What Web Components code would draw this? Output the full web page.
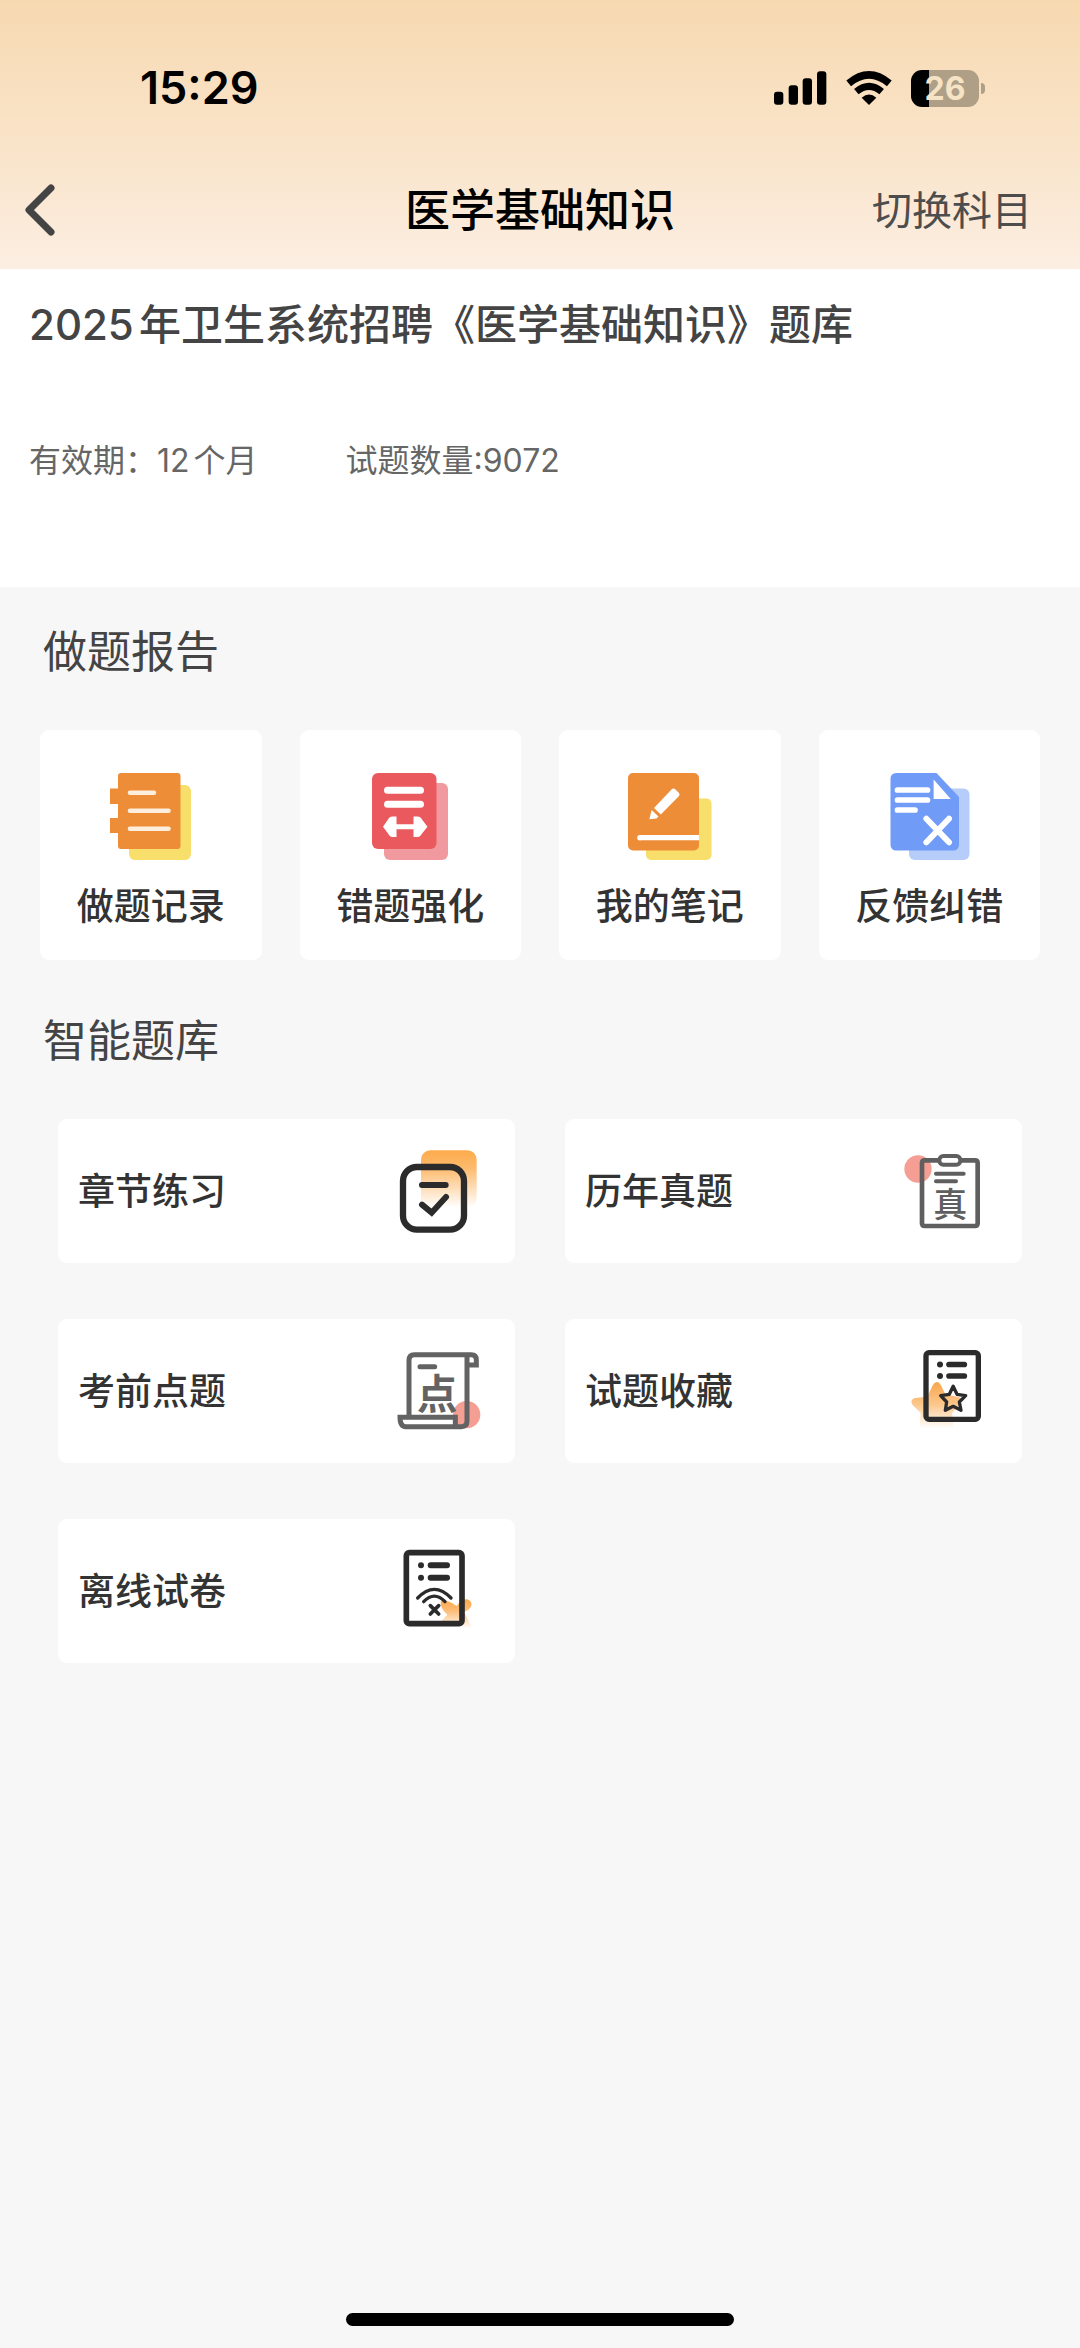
<!DOCTYPE html>
<html lang="zh-CN">
<head>
<meta charset="utf-8">
<meta name="viewport" content="width=device-width, initial-scale=1">
<title>医学基础知识</title>
<style>
  body {
    margin: 0;
    background: #f7f7f7;
    color: #333;
    font-family: Inter, "Noto Sans CJK SC", sans-serif;
    text-autospace: normal;
  }
  .tight { text-autospace: no-autospace; }
</style>
</head>
<body>
<question-bank-page>
  <phone-status slot="header" time="15:29" battery="26"></phone-status>
  <nav-bar slot="header">
    医学基础知识
    <span slot="action">切换科目</span>
  </nav-bar>
  <bank-summary>
    2025年卫生系统招聘《医学基础知识》题库
    <span slot="meta">有效期：12个月</span>
    <span slot="meta" class="tight">试题数量:9072</span>
  </bank-summary>
  <section-block heading="做题报告" layout="tiles">
    <report-tile icon="record">做题记录</report-tile>
    <report-tile icon="strengthen">错题强化</report-tile>
    <report-tile icon="note">我的笔记</report-tile>
    <report-tile icon="feedback">反馈纠错</report-tile>
  </section-block>
  <section-block heading="智能题库" layout="cards">
    <practice-card icon="chapter">章节练习</practice-card>
    <practice-card icon="past">历年真题</practice-card>
    <practice-card icon="predict">考前点题</practice-card>
    <practice-card icon="favorite">试题收藏</practice-card>
    <practice-card icon="offline">离线试卷</practice-card>
  </section-block>
</question-bank-page>

<script>
const ICONS = {
  record: `<svg viewBox="0 0 90 90" aria-hidden="true">
    <rect x="23" y="14" width="62" height="75" rx="6" fill="#f8de6b"/>
    <path d="M15 2H71.500a3 3 0 0 1 3 3V75a3 3 0 0 1-3 3H15a3 3 0 0 1-3-3V62H4V47H12V33H4V17.500H12V5a3 3 0 0 1 3-3z" fill="#ee8d38"/>
    <path d="M24 21.700H48M24 39.700H62.500M24 57.700H62.500" stroke="#fdeedd" stroke-width="4.600" stroke-linecap="round"/>
  </svg>`,
  strengthen: `<svg viewBox="0 0 90 90" aria-hidden="true">
    <rect x="19" y="12" width="64" height="77" rx="6" fill="#f09aa0"/>
    <rect x="7" y="2" width="64.500" height="76" rx="6" fill="#e9595e"/>
    <path d="M22.500 19.300H55.500M22.500 33.300H55.500" stroke="#fff" stroke-width="7" stroke-linecap="round"/>
    <path d="M18 55.700L23 48.500Q24.500 45.500 27.500 45.500H31.500V53.300H48.500V45.500H52.500Q55.500 45.500 57 48.500L62.500 55.700L57 62.500Q55 66 52.500 66H48.500V58.200H31.500V66H27.500Q25 66 23 62.500z" fill="#fff"/>
  </svg>`,
  note: `<svg viewBox="0 0 90 90" aria-hidden="true">
    <rect x="21" y="27.500" width="65.500" height="61.500" rx="5" fill="#f8de6b"/>
    <rect x="3" y="2" width="71" height="77.500" rx="5" fill="#ee8d38"/>
    <path d="M14.500 66.700H74" stroke="#fff" stroke-width="5.200"/>
    <circle cx="14.800" cy="66.700" r="2.600" fill="#fff"/>
    <path d="M29 37L46.500 18.500Q48.500 16.500 50.500 18.500L53.500 21.500Q55.500 23.500 53.500 25.500L35.800 43.500zM26.700 39L33.500 45.500L31.500 47.500L24.300 48.300z" fill="#fff"/>
  </svg>`,
  feedback: `<svg viewBox="0 0 90 90" aria-hidden="true">
    <rect x="25" y="17.500" width="60.500" height="71.500" rx="6" fill="#b6cdf9"/>
    <path d="M12 2H52.500L75 26V74a5.500 5.500 0 0 1-5.500 5.500H12A5.500 5.500 0 0 1 6.500 74V7.500A5.500 5.500 0 0 1 12 2z" fill="#709bf7"/>
    <path d="M49.600 8.500V28H66.800z" fill="#fff"/>
    <path d="M13.500 19H43.500M13.500 29H43.500M13.500 39H31" stroke="#fff" stroke-width="5.700" stroke-linecap="round"/>
    <path d="M42.400 47.700L65 71.300M65 47.700L42.400 71.300" stroke="#fff" stroke-width="6" stroke-linecap="round"/>
  </svg>`,
  chapter: `<svg viewBox="105 108 270 270" aria-hidden="true">
    <defs><linearGradient id="fade" x1="0" y1="0" x2="0" y2="1">
      <stop offset="0" stop-color="#fdab4c"/><stop offset=".3" stop-color="#fdba6c"/><stop offset="1" stop-color="#fff"/>
    </linearGradient></defs>
    <rect x="183" y="121" width="167" height="172" rx="28" fill="url(#fade)"/>
    <rect x="129" y="171" width="183" height="188" rx="42" fill="none" stroke="#2b2b2b" stroke-width="19"/>
    <path d="M186 225H257M186 284L215 308L258 261" fill="none" stroke="#2b2b2b" stroke-width="18" stroke-linecap="round"/>
  </svg>`,
  past: `<svg viewBox="126 108 270 270" aria-hidden="true">
    <circle cx="174" cy="177" r="41" fill="#f59e94"/>
    <path d="M236 151H194Q186 151 186 159V340Q186 348 194 348H345Q353 348 353 340V159Q353 151 345 151H303" fill="none" stroke="#5f5f5f" stroke-width="14"/>
    <rect x="238" y="138" width="63" height="26" rx="12" fill="#fff" stroke="#5f5f5f" stroke-width="12"/>
    <path d="M228 191H311M228 214H288" stroke="#5f5f5f" stroke-width="12" stroke-linecap="round"/>
    <text x="271" y="322" font-size="102" text-anchor="middle" font-weight="500" fill="#5f5f5f">真</text>
  </svg>`,
  predict: `<svg viewBox="105 108 270 270" aria-hidden="true">
    <circle cx="320" cy="314" r="41" fill="#f59e94"/>
    <path d="M147 319V151Q147 134 163 134H334Q349 134 349 150V165H321V334Q321 350 304 350H137Q120 350 120 322H286V346M321 165V134" fill="none" stroke="#636363" stroke-width="15"/>
    <path d="M180 170H224" stroke="#636363" stroke-width="15" stroke-linecap="round"/>
    <text x="231" y="297" font-size="122" text-anchor="middle" font-weight="700" fill="#636363">点</text>
  </svg>`,
  favorite: `<svg viewBox="126 108 270 270" aria-hidden="true">
    <defs><linearGradient id="fade" x1="0" y1="0" x2="0" y2="1">
      <stop offset="0" stop-color="#f9a64c"/><stop offset=".5" stop-color="#fcc88f"/><stop offset="1" stop-color="#fff"/>
    </linearGradient></defs>
    <path d="M217 228Q231 204 244 228L256 253L298 262Q309 268 300 280L276 310L282 355H178L182 309L158 285Q148 270 164 264L202 260z" fill="url(#fade)"/>
    <rect x="198" y="128" width="157" height="200" rx="9" fill="none" stroke="#2b2b2b" stroke-width="16"/>
    <path d="M267 163.500H313M267 198H313" stroke="#2b2b2b" stroke-width="17" stroke-linecap="round"/>
    <circle cx="240" cy="163.500" r="9" fill="#2b2b2b"/><circle cx="240" cy="198" r="9" fill="#2b2b2b"/>
    <path d="M279.500 229L291 253L317 257L298 276L303 301L279.500 289L256 301L260 276L242 257L268 253z" fill="none" stroke="#2b2b2b" stroke-width="10" stroke-linejoin="round"/>
  </svg>`,
  offline: `<svg viewBox="105 108 270 270" aria-hidden="true">
    <defs><linearGradient id="fade" x1="0" y1="0" x2="0" y2="1">
      <stop offset="0" stop-color="#fba84b"/><stop offset=".4" stop-color="#fcbd79"/><stop offset="1" stop-color="#fff"/>
    </linearGradient></defs>
    <path d="M242 274Q262 268 290 288Q304 266 322 268Q340 276 332 292Q326 302 312 306L338 356L240 338L262 314Q240 296 242 274z" fill="url(#fade)"/>
    <rect x="139" y="128" width="167" height="213" rx="9" fill="none" stroke="#2b2b2b" stroke-width="17"/>
    <path d="M212 166H261M212 203.500H261" stroke="#2b2b2b" stroke-width="18" stroke-linecap="round"/>
    <circle cx="183" cy="166" r="9" fill="#2b2b2b"/><circle cx="183" cy="203.500" r="9" fill="#2b2b2b"/>
    <path d="M173 264Q223 212 273 264M191 275Q223 242 255 275" fill="none" stroke="#2b2b2b" stroke-width="10" stroke-linecap="round"/>
    <path d="M211 287L236 312M236 287L211 312" stroke="#2b2b2b" stroke-width="11" stroke-linecap="round"/>
  </svg>`
};

class BaseElement extends HTMLElement {
  connectedCallback() {
    if (!this.shadowRoot) {
      this.attachShadow({ mode: "open" }).innerHTML = this.render();
    }
  }
}

customElements.define("question-bank-page", class extends BaseElement {
  render() {
    return `<style>
      :host { display: flex; flex-direction: column; min-height: 100vh; }
      header { background: linear-gradient(#f7d9b1, #f9e3c7 50%, #fceee2); }
      main { display: flex; flex-direction: column; }
      footer { display: flex; justify-content: center; margin-top: auto; padding: 24px 0 22px; }
      .indicator { width: 36%; height: 13px; border-radius: 8px; background: #000; }
    </style>
    <header><slot name="header"></slot></header>
    <main><slot></slot></main>
    <footer><div class="indicator"></div></footer>`;
  }
});

customElements.define("phone-status", class extends BaseElement {
  render() {
    return `<style>
      :host { display: flex; align-items: center; justify-content: space-between; height: 130px; padding: 23px 95px 0 140px; color: #000; }
      time { font-size: 45px; line-height: 56px; font-weight: 600; }
      .icons { display: flex; align-items: center; gap: 19px; }
      svg { display: block; }
      .battery { display: flex; align-items: center; gap: 2px; }
      .level { display: flex; align-items: center; justify-content: center; width: 68px; height: 37px; border-radius: 11px;
        background: linear-gradient(90deg, #000 27%, #af9f86 27%); color: #f6e3c6; font-size: 32px; line-height: 37px; font-weight: 700; }
      .tip { width: 4px; height: 11px; border-radius: 0 6px 6px 0; background: #af9f86; }
    </style>
    <time>${this.getAttribute("time")}</time>
    <div class="icons">
      <svg width="53" height="34" viewBox="103 91 159 102" aria-hidden="true">
        <rect x="103" y="153" width="28" height="39" rx="9"/><rect x="147" y="134" width="28" height="58" rx="9"/>
        <rect x="189" y="113" width="28" height="79" rx="9"/><rect x="232" y="92" width="28" height="100" rx="9"/>
      </svg>
      <svg width="46" height="34" viewBox="319 91 138 102" aria-hidden="true">
        <path d="M327 128Q388 77 449 128" fill="none" stroke="#000" stroke-width="22"/>
        <path d="M350 153Q388 121 426 153" fill="none" stroke="#000" stroke-width="21"/>
        <path d="M366 171Q388 152 410 171L388 193z"/>
      </svg>
      <div class="battery"><span class="level">${this.getAttribute("battery")}</span><span class="tip"></span></div>
    </div>`;
  }
});

customElements.define("nav-bar", class extends BaseElement {
  render() {
    return `<style>
      :host { display: grid; grid-template-columns: 1fr auto 1fr; align-items: center; height: 116px; padding: 0 48px 0 24px; }
      button { border: 0; padding: 0; background: none; font: inherit; color: inherit; cursor: pointer; }
      .back { justify-self: start; width: 60px; height: 60px; }
      .back svg { display: block; }
      h1 { margin: 0 0 0 24px; font-size: 45px; line-height: 60px; font-weight: 500; color: #000; }
      .action { justify-self: end; font-size: 40px; line-height: 60px; color: #4d4d4d; }
    </style>
    <button class="back" aria-label="返回"><svg width="32" height="60" viewBox="0 0 32 60" fill="none" stroke="#444" stroke-width="7" stroke-linecap="round" stroke-linejoin="round" aria-hidden="true"><path d="M27 7L5 29L27 51"/></svg></button>
    <h1><slot></slot></h1>
    <button class="action"><slot name="action"></slot></button>`;
  }
});

customElements.define("bank-summary", class extends BaseElement {
  render() {
    return `<style>
      :host { display: block; padding: 26px 29px 102px; background: #fff; }
      h2 { margin: 0 0 82px; font-size: 42px; line-height: 60px; font-weight: 500; color: #444; }
      .meta { display: flex; gap: 88px; font-size: 32px; line-height: 48px; color: #666; }
    </style>
    <h2><slot></slot></h2>
    <div class="meta"><slot name="meta"></slot></div>`;
  }
});

customElements.define("section-block", class extends BaseElement {
  render() {
    return `<style>
      :host { display: block; padding-top: 35px; }
      :host([layout="cards"]) { padding-top: 51px; }
      h2 { margin: 0 43px 48px; font-size: 44px; line-height: 60px; font-weight: 400; color: #444; }
      .tiles { display: grid; grid-template-columns: repeat(4, 1fr); gap: 38px; padding: 0 40px; }
      .cards { display: grid; grid-template-columns: repeat(2, 1fr); gap: 56px 50px; padding: 0 58px; }
    </style>
    <h2>${this.getAttribute("heading")}</h2>
    <div class="${this.getAttribute("layout")}"><slot></slot></div>`;
  }
});

customElements.define("report-tile", class extends BaseElement {
  render() {
    return `<style>
      :host { display: block; }
      button { display: flex; flex-direction: column; align-items: center; gap: 21px; width: 100%; padding: 41px 0 28px; border: 0; border-radius: 9px;
        background: #fff; font: inherit; font-size: 37px; line-height: 50px; font-weight: 500; color: #333; cursor: pointer; }
      svg { display: block; width: 90px; height: 90px; }
    </style>
    <button>${ICONS[this.getAttribute("icon")]}<span><slot></slot></span></button>`;
  }
});

customElements.define("practice-card", class extends BaseElement {
  render() {
    return `<style>
      :host { display: block; }
      button { display: flex; align-items: center; justify-content: space-between; width: 100%; padding: 27px 30px 27px 20px; border: 0; border-radius: 9px;
        background: #fff; font: inherit; font-size: 37px; line-height: 50px; font-weight: 500; color: #333; cursor: pointer; }
      span { padding-top: 2px; }
      svg { display: block; width: 90px; height: 90px; }
    </style>
    <button><span><slot></slot></span>${ICONS[this.getAttribute("icon")]}</button>`;
  }
});
</script>
</body>
</html>
